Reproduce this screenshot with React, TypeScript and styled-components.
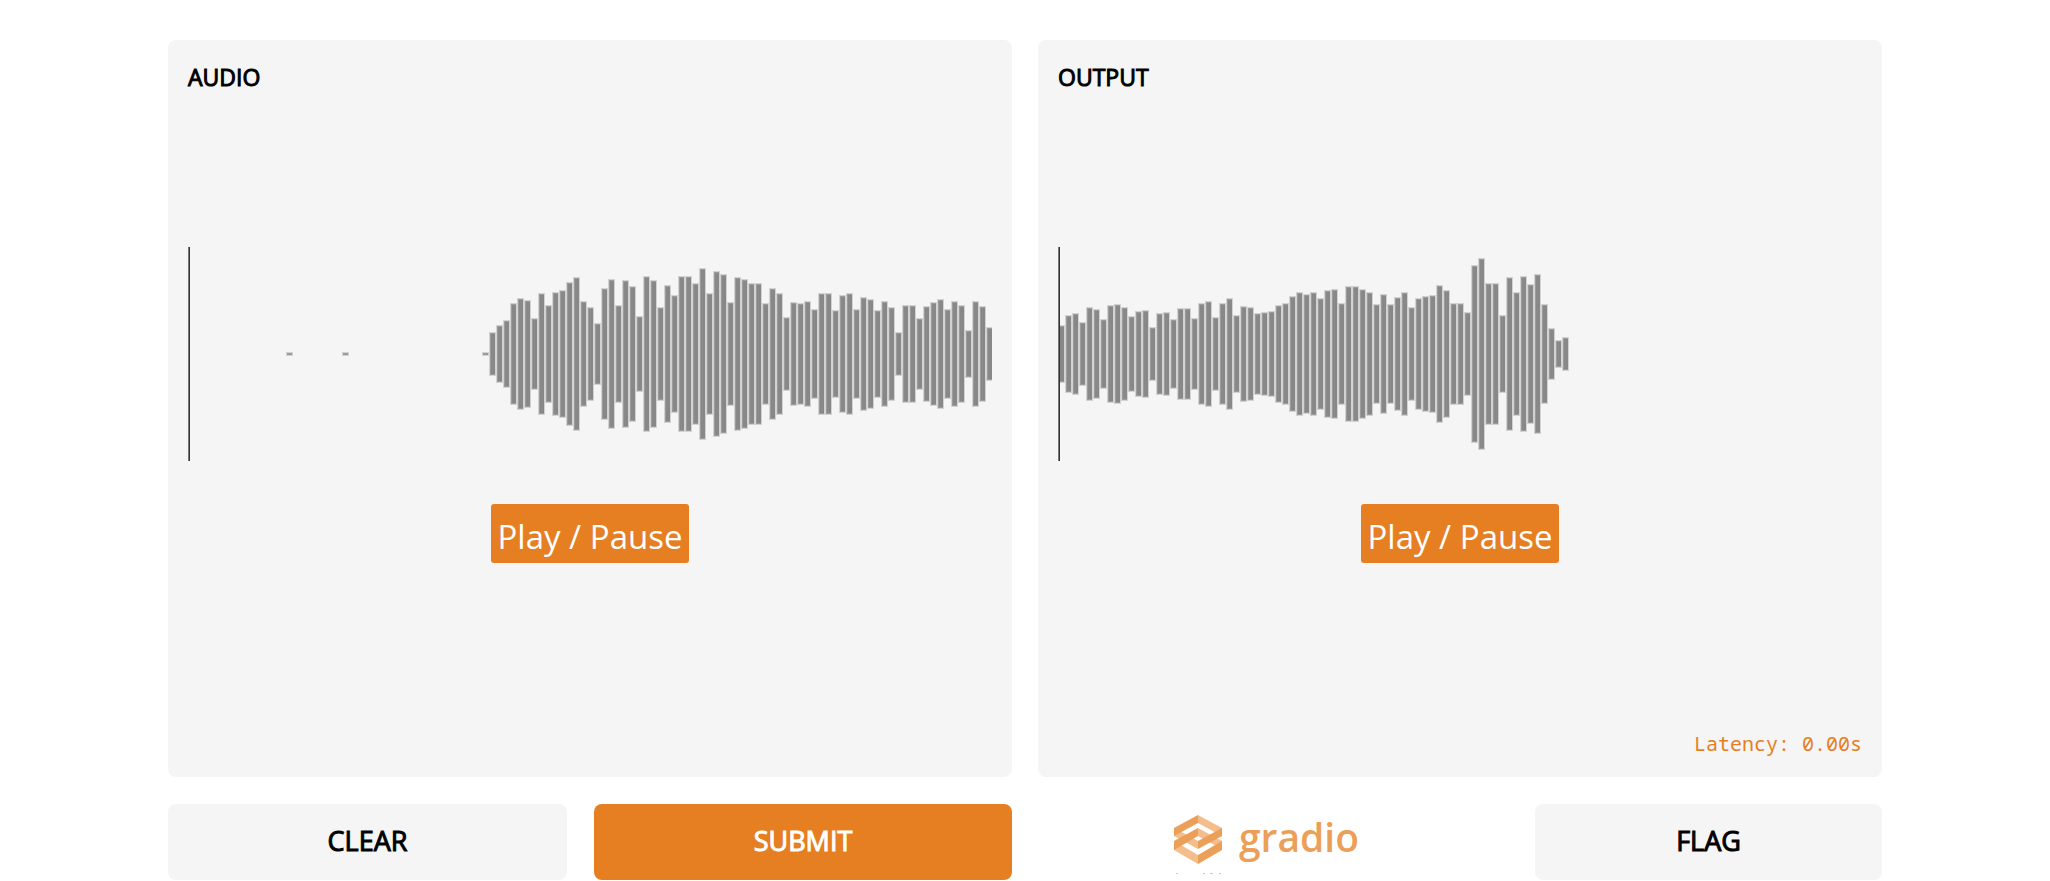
import React from 'react';
import styled, { createGlobalStyle } from 'styled-components';

const ORANGE = '#e67e22';
const GREY = '#f5f5f5';

const GlobalStyle = createGlobalStyle`
  *, *::before, *::after { box-sizing: border-box; }
  body {
    margin: 0;
    background: #fff;
    color: #000;
    font-family: 'Open Sans', 'Noto Sans', sans-serif;
  }
`;

const Page = styled.main`
  display: flex;
  flex-direction: column;
  gap: 27px;
  padding: 40px 168px 0;
`;

const Columns = styled.div`
  display: grid;
  grid-template-columns: repeat(2, minmax(0, 1fr));
  gap: 26px;
`;

const Panel = styled.section`
  display: flex;
  flex-direction: column;
  min-height: 737px;
  padding: 20px;
  border-radius: 8px;
  background: ${GREY};
`;

const PanelTitle = styled.h2`
  margin: 0;
  font-size: 23px;
  line-height: 34px;
  font-weight: 400;
  -webkit-text-stroke: 1px currentColor;
`;

const Player = styled.div`
  display: flex;
  flex: 1;
  flex-direction: column;
  align-items: center;
  gap: 43px;
  padding-top: 153px;
`;

const Wave = styled.svg`
  display: block;
  width: 100%;
  height: 214px;
`;

const PlayButton = styled.button`
  height: 59px;
  padding: 7px 7px 0;
  border: 0;
  border-radius: 3px;
  background: ${ORANGE};
  color: #fff;
  font-family: inherit;
  font-size: 33px;
  line-height: 52px;
  white-space: nowrap;
  cursor: pointer;
`;

const Latency = styled.p`
  margin: 0;
  color: ${ORANGE};
  font-family: 'Noto Sans Mono', 'DejaVu Sans Mono', monospace;
  font-size: 20px;
  line-height: 26px;
  text-align: right;
`;

const Actions = styled.div<{ $columns: string }>`
  display: grid;
  grid-template-columns: ${(p) => p.$columns};
  gap: 27px;
`;

const ActionButton = styled.button<{ $primary?: boolean }>`
  height: 76px;
  padding: 0 0 2px;
  border: 0;
  border-radius: 8px;
  background: ${(p) => (p.$primary ? ORANGE : GREY)};
  color: ${(p) => (p.$primary ? '#fff' : '#000')};
  font-family: inherit;
  font-size: 27px;
  line-height: 36px;
  -webkit-text-stroke: 1px currentColor;
  cursor: pointer;
`;

const BrandLink = styled.a`
  display: flex;
  align-items: flex-start;
  justify-content: center;
  gap: 16px;
  padding: 7px 14px 0 0;
  color: #ec9f59;
  font-size: 39px;
  line-height: 52px;
  font-weight: 600;
  text-decoration: none;
`;

const LogoMark = styled.svg`
  width: 50px;
  height: 65px;
`;

const SILENCE = 0;

const recorded: number[] = [
  ...Array.from({ length: 43 }, (_, i) => ([14, 22, 42].includes(i) ? 1 : SILENCE)),
  21, 28, 33, 50, 55, 53, 35, 60, 48, 61, 63, 71, 76, 52, 46, 30, 65, 74, 48, 73, 67, 37, 77, 73,
  46, 68, 58, 77, 77, 70, 85, 60, 82, 79, 51, 76, 74, 70, 70, 50, 65, 60, 36, 51, 50, 52, 44, 60,
  60, 43, 58, 60, 44, 56, 54, 43, 52, 46, 21, 48, 48, 35, 47, 51, 54, 44, 52, 48, 23, 52, 47, 26,
];

const produced: number[] = [
  28, 38, 40, 31, 46, 44, 34, 48, 49, 46, 37, 42, 43, 26, 40, 41, 34, 45, 45, 35, 50, 52, 36, 50,
  55, 38, 47, 46, 40, 41, 42, 48, 50, 57, 61, 59, 61, 55, 63, 64, 50, 67, 67, 64, 61, 49, 59, 49,
  56, 61, 46, 55, 57, 58, 68, 63, 50, 50, 41, 88, 95, 70, 70, 38, 76, 61, 77, 69, 79, 49, 25, 13,
  16,
];

function Waveform({ peaks, label }: { peaks: number[]; label: string }) {
  return (
    <Wave role="img" aria-label={label} shapeRendering="crispEdges">
      {peaks.map((h, i) =>
        h === SILENCE ? null : (
          <g key={i}>
            <rect x={i * 7} y={106 - h} width={7} height={h * 2 + 2} fill="#d2d2d2" />
            <rect x={i * 7 + 1} y={107 - h} width={5} height={h * 2} fill="#9c9c9c" />
            {h > 1 && <rect x={i * 7 + 2} y={108 - h} width={4} height={h * 2 - 2} fill="#888" />}
          </g>
        ),
      )}
      <rect x={0} y={0} width={1} height={214} fill="#777" />
      <rect x={1} y={0} width={1} height={214} fill="#333" />
    </Wave>
  );
}

export default function App() {
  return (
    <>
      <GlobalStyle />
      <Page>
        <Columns>
          <Panel>
            <PanelTitle>AUDIO</PanelTitle>
            <Player>
              <Waveform peaks={recorded} label="Recorded audio" />
              <PlayButton type="button">Play / Pause</PlayButton>
            </Player>
          </Panel>
          <Panel>
            <PanelTitle>OUTPUT</PanelTitle>
            <Player>
              <Waveform peaks={produced} label="Output audio" />
              <PlayButton type="button">Play / Pause</PlayButton>
            </Player>
            <Latency>Latency: 0.00s</Latency>
          </Panel>
        </Columns>
        <Columns>
          <Actions $columns="399fr 418fr">
            <ActionButton type="button">CLEAR</ActionButton>
            <ActionButton type="button" $primary>SUBMIT</ActionButton>
          </Actions>
          <Actions $columns="470fr 347fr">
            <BrandLink href="#gradio">
              <LogoMark viewBox="0 0 50 65" aria-hidden="true">
                <g fill="#f3bd8c">
                  <path d="M25 4l24 13v8L25 12z" />
                  <path d="M1 17l24 13v8L1 25z" />
                  <path d="M25 17l24 13v8L25 25z" />
                  <path d="M1 30l24 14v9L1 39z" />
                </g>
                <g fill="#ec9f59">
                  <path d="M25 4L1 17v8l24-13z" />
                  <path d="M49 17L25 30v8l24-13z" />
                  <path d="M25 17L1 30v9l24-14z" />
                  <path d="M49 30L25 44v9l24-14z" />
                </g>
                <g fill="#f3bd8c">
                  <rect x="3" y="62" width="2" height="1" />
                  <rect x="30" y="62" width="2" height="1" />
                  <rect x="37" y="62" width="3" height="1" />
                  <rect x="46" y="62" width="2" height="1" />
                </g>
              </LogoMark>
              gradio
            </BrandLink>
            <ActionButton type="button">FLAG</ActionButton>
          </Actions>
        </Columns>
      </Page>
    </>
  );
}
